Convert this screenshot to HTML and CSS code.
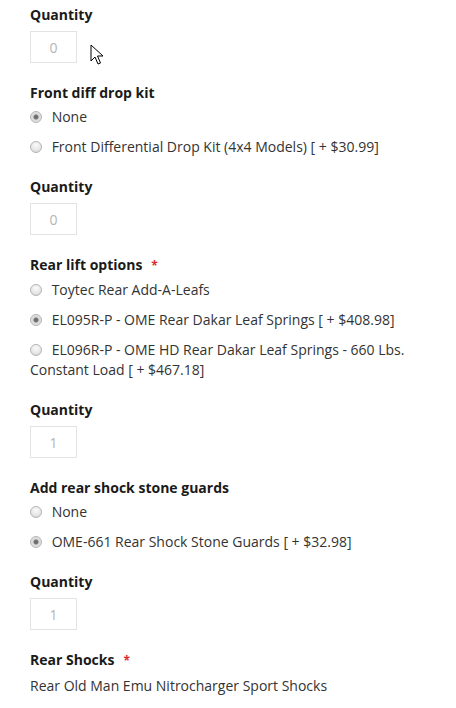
FILE: index.html
```html
<!DOCTYPE html>
<html>
  <head>
    <meta charset="utf-8">
    <title>Product options</title>
    <link rel="stylesheet" href="styles.css">
  </head>
  <body>
    <form class="options">
      <div class="field">
        <div class="label">Quantity</div>
        <input class="qty" type="text" value="0">
      </div>
      <div class="field">
        <div class="label">Front diff drop kit</div>
        <div class="choices">
          <label class="choice"><input type="radio" name="fd" checked> None</label>
          <label class="choice"><input type="radio" name="fd"> Front Differential Drop Kit (4x4 Models) [ + $30.99]</label>
        </div>
      </div>
      <div class="field">
        <div class="label">Quantity</div>
        <input class="qty" type="text" value="0">
      </div>
      <div class="field">
        <div class="label required">Rear lift options</div>
        <div class="choices">
          <label class="choice"><input type="radio" name="rl"> Toytec Rear Add-A-Leafs</label>
          <label class="choice"><input type="radio" name="rl" checked> EL095R-P - OME Rear Dakar Leaf Springs [ + $408.98]</label>
          <label class="choice"><input type="radio" name="rl"> EL096R-P - OME HD Rear Dakar Leaf Springs - 660 Lbs. Constant Load [ + $467.18]</label>
        </div>
      </div>
      <div class="field">
        <div class="label">Quantity</div>
        <input class="qty" type="text" value="1">
      </div>
      <div class="field">
        <div class="label">Add rear shock stone guards</div>
        <div class="choices">
          <label class="choice"><input type="radio" name="sg"> None</label>
          <label class="choice"><input type="radio" name="sg" checked> OME-661 Rear Shock Stone Guards [ + $32.98]</label>
        </div>
      </div>
      <div class="field">
        <div class="label">Quantity</div>
        <input class="qty" type="text" value="1">
      </div>
      <div class="field">
        <div class="label required">Rear Shocks</div>
        <div class="static">Rear Old Man Emu Nitrocharger Sport Shocks</div>
      </div>
    </form>
    <svg class="pointer" width="14" height="22" viewBox="0 0 14 22">
      <path d="M1 1 L1 17 L5 13 L8 20 L10.5 19 L7.5 12 L13 12 Z" fill="#fff" stroke="#000" stroke-width="1" stroke-linejoin="round"/>
    </svg>
  </body>
</html>
```

FILE: styles.css
```css
*, *:before, *:after {
  box-sizing: border-box;
}
html, body {
  margin: 0;
  padding: 0;
}
body {
  position: relative;
  background: #fff;
  color: #333;
  font-family: "Open Sans", sans-serif;
  font-size: 14px;
  line-height: 20px;
}
.options {
  padding: 5px 0 0 30px;
  width: 420px;
}
.field {
  margin-bottom: 20px;
}
.label {
  font-weight: bold;
  color: #1a1a1a;
  margin-bottom: 4px;
}
.label.required:after {
  content: "*";
  color: #e02b27;
  font-size: 12px;
  margin-left: 9px;
}
.qty {
  display: block;
  margin-top: 6px;
  width: 47px;
  height: 32px;
  border: 1px solid #e3e3e3;
  background: #fff;
  color: #b5b5b5;
  font-family: "Open Sans", sans-serif;
  font-size: 14px;
  text-align: center;
  padding: 0;
}
.choices {
  display: flex;
  flex-direction: column;
  gap: 10px;
}
.choice {
  display: block;
}
.choice input {
  -webkit-appearance: none;
  appearance: none;
  width: 12px;
  height: 12px;
  margin: 0 6px 0 0;
  vertical-align: -1px;
  border: 1px solid #b4b4b4;
  border-radius: 50%;
  background: radial-gradient(circle at 50% 30%, #fafafa 0%, #e6e6e6 60%, #d0d0d0 100%);
}
.choice input:checked {
  background: radial-gradient(circle, #666 0, #777 2px, #d8d8d8 3px, #ececec 100%);
}
.static {
  margin-top: 5px;
}
.pointer {
  position: absolute;
  left: 90px;
  top: 44px;
}
```
